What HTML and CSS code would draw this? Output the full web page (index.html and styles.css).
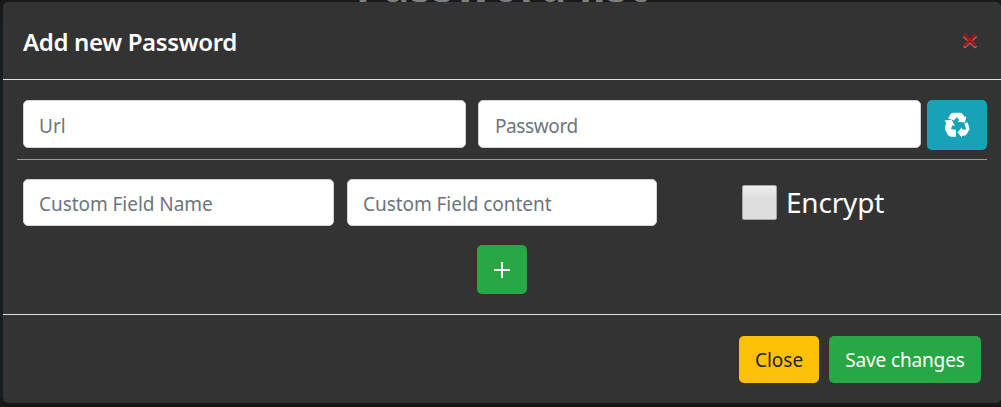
FILE: index.html
```
<!DOCTYPE html>
<html lang="en">
<head>
<meta charset="utf-8">
<title>Add new Password</title>
<link rel="stylesheet" href="styles.css">
</head>
<body>
<h1 class="page-title">Password list</h1>
<section class="modal">
  <header class="modal-header">
    <h2 class="modal-title">Add new Password</h2>
    <button class="dismiss" aria-label="Close dialog">
      <svg width="16" height="16" viewBox="0 0 16 16"><path d="M2 3l12 11.5M14 3L2 14.5" stroke="#8b8b8b" stroke-width="3"/><path d="M2 1.7l12 11.5M14 1.7L2 13.2" stroke="#a51515" stroke-width="3"/></svg>
    </button>
  </header>
  <div class="modal-body">
    <div class="row main-row">
      <input class="field" placeholder="Url">
      <input class="field password" placeholder="Password">
      <button class="btn info" aria-label="Generate">
        <svg width="26" height="26" viewBox="0 0 26 26" fill="#fff"><path d="M4 6.5L6 3Q7.200 .8 9.500 .8H16q2 0 3 1.700l1.500 2.500 1.800-.8-1.300 6.300-7.500-.8 2-1.600-3-2.800-2.300 3.200z"/><path d="M20.500 11.500l3-1.200 1.500 4.200q1 2-.2 4l-1.600 3q-1.200 2.300-3.500 2.300H18v1.700l-4.500-5 4.500-5.200v2.200h4z"/><path d="M.5 8.500l7.300-.8 3 6.300-2.500-.8-1.300 4 5 .5v7H7.500q-2.500 0-3.700-2L1.300 18q-1-2 0-4l1-3z"/></svg>
      </button>
    </div>
    <div class="row custom-row">
      <input class="field" placeholder="Custom Field Name">
      <input class="field" placeholder="Custom Field content">
      <label class="encrypt"><span class="checkbox"></span><span class="encrypt-text">Encrypt</span></label>
    </div>
    <button class="btn add" aria-label="Add field"><svg width="18" height="18" viewBox="0 0 18 18"><path d="M9 1v16M1 9h16" stroke="#fff" stroke-width="2"/></svg></button>
  </div>
  <footer class="modal-footer">
    <button class="btn close"><span class="close-text">Close</span></button>
    <button class="btn save"><span class="save-text">Save changes</span></button>
  </footer>
</section>
</body>
</html>
```
FILE: styles.css
```
* { box-sizing: border-box; }
body {
  margin: 0;
  width: 1001px;
  height: 407px;
  padding: 2px 0 4px 3px;
  overflow: hidden;
  position: relative;
  background: linear-gradient(#191919 0 24px, #1a1e21 24px 397px, #171717 397px);
  font-family: "Noto Sans", "Open Sans", sans-serif;
  font-size: 19px;
}
.page-title {
  position: absolute;
  left: 356px;
  top: -44px;
  margin: 0;
  line-height: 60px;
  font-size: 43px;
  font-weight: 700;
  letter-spacing: .8px;
  white-space: nowrap;
  color: #808080;
}
.modal {
  position: relative;
  display: flex;
  flex-direction: column;
  width: 998px;
  height: 401px;
  border-radius: 5px;
  background: #333;
  color: #fff;
}
.modal-header {
  display: flex;
  align-items: center;
  justify-content: space-between;
  height: 78px;
  padding: 0 23px 0 20px;
  border-bottom: 1px solid #dee2e6;
}
.modal-title {
  margin: 0;
  padding-top: 2px;
  font-size: 24px;
  font-weight: 600;
  line-height: 36px;
  letter-spacing: -.35px;
}
.dismiss {
  display: flex;
  padding: 0;
  border: 0;
  background: none;
}
.modal-body {
  display: flex;
  flex-direction: column;
  height: 234px;
  padding: 20px 14px 0;
}
.row { display: flex; align-items: flex-start; }
.main-row {
  height: 60px;
  padding-left: 6px;
  border-bottom: 1px solid #999b9b;
}
.field {
  width: 443px;
  height: 48px;
  margin: 0 12px 0 0;
  padding: 4px 15px 0;
  border: 1px solid #ced4da;
  border-radius: 5px;
  background: #fff;
  font: inherit;
}
.field::placeholder { color: #6c757d; opacity: 1; }
.password { margin-right: 6px; padding-left: 16px; letter-spacing: -.4px; }
.btn {
  display: flex;
  align-items: center;
  justify-content: center;
  padding: 0;
  border: 0;
  border-radius: 5px;
  color: #fff;
  font: inherit;
  white-space: nowrap;
}
.info { width: 60px; height: 50px; background: #17a2b8; }
.custom-row { padding: 19px 0 0 6px; }
.custom-row .field {
  width: 311px;
  height: 47px;
  padding-top: 3px;
  margin-right: 13px;
  letter-spacing: -.05px;
}
.custom-row .field + .field { width: 310px; }
.encrypt {
  display: flex;
  align-items: center;
  gap: 9px;
  margin: 6px 0 0 72px;
  height: 35px;
  font-size: 28px;
}
.checkbox {
  width: 35px;
  height: 35px;
  border: 1px solid #aaa5a5;
  border-radius: 2px;
  background: linear-gradient(#eee, #ddd 40%, #dedede);
}
.encrypt-text { margin-top: -2px; letter-spacing: -.2px; }
.add {
  width: 50px;
  height: 49px;
  margin: 19px 0 0 460px;
  background: #28a745;
}
.modal-footer {
  display: flex;
  gap: 10px;
  height: 89px;
  padding: 21px 20px 0;
  justify-content: flex-end;
  border-top: 1px solid #dee2e6;
}
.close { width: 80px; height: 47px; background: #ffc107; color: #212529; }
.save { width: 152px; height: 47px; background: #28a745; letter-spacing: -.15px; }
```
